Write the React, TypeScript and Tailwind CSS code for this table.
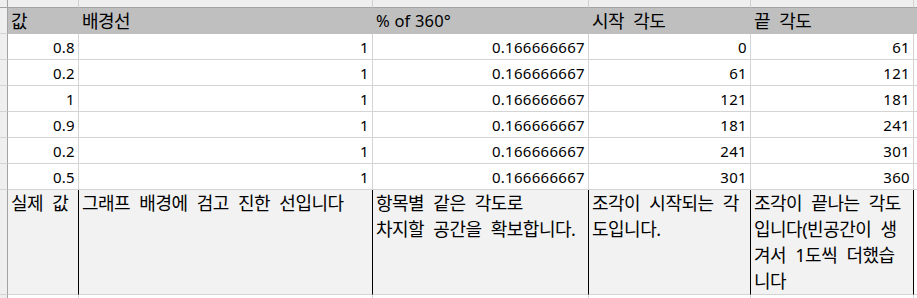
import React from "react";

const rows: [string, string, string, string, string][] = [
  ["0.8", "1", "0.166666667", "0", "61"],
  ["0.2", "1", "0.166666667", "61", "121"],
  ["1", "1", "0.166666667", "121", "181"],
  ["0.9", "1", "0.166666667", "181", "241"],
  ["0.2", "1", "0.166666667", "241", "301"],
  ["0.5", "1", "0.166666667", "301", "360"],
];

const headers = ["값", "배경선", "% of 360°", "시작 각도", "끝 각도"];

const descs: string[][] = [
  ["실제 값"],
  ["그래프 배경에 검고 진한 선입니다"],
  ["항목별 같은 각도로", "차지할 공간을 확보합니다."],
  ["조각이 시작되는 각", "도입니다."],
  ["조각이 끝나는 각도", "입니다(빈공간이 생", "겨서 1도씩 더했습", "니다"],
];

const kr =
  "text-[18px] tracking-[-0.5px] [word-spacing:5px] whitespace-nowrap text-black";
const num = "text-[15px] tracking-[0.3px] whitespace-nowrap text-black";

export default function App() {
  return (
    <div className="w-[917px] h-[298px] overflow-hidden bg-white font-['Noto_Sans','Noto_Sans_CJK_KR',sans-serif]">
      <div className="grid grid-cols-[8px_71px_294px_216px_162px_163px_1fr]">
        {/* top column-header strip */}
        <div className="h-[8px] bg-[#efefef] border-r border-b border-[#a3a3a3]" />
        {[0, 1, 2, 3, 4].map((i) => (
          <div
            key={"t" + i}
            className="h-[8px] bg-[#efefef] border-r border-r-[#d0d0d0] border-b border-b-[#a3a3a3]"
          />
        ))}
        <div className="h-[8px] bg-[#efefef] border-b border-b-[#a3a3a3]" />

        {/* header row */}
        <div className="h-[26px] bg-[#efefef] border-r border-r-[#a3a3a3] border-b border-b-[#d4d4d4]" />
        {headers.map((h, i) => (
          <div
            key={"h" + i}
            className={`h-[26px] bg-[#bfbfbf] pl-[3px] leading-[26px] ${
              i === 2 ? "text-[16.5px] tracking-[0.2px] whitespace-nowrap text-black" : kr
            }`}
          >
            {h}
          </div>
        ))}
        <div className="h-[26px] bg-[#bfbfbf]" />

        {/* data rows */}
        {rows.map((r, ri) => (
          <React.Fragment key={"r" + ri}>
            <div className="h-[26px] bg-[#efefef] border-r border-r-[#a3a3a3] border-b border-b-[#d4d4d4]" />
            {r.map((v, ci) => (
              <div
                key={ci}
                className={`h-[26px] bg-white border-r border-b border-[#d4d4d4] pr-[3px] pt-[2px] leading-[23px] text-right ${num}`}
              >
                {v}
              </div>
            ))}
            <div className="h-[26px] bg-white border-b border-[#d4d4d4]" />
          </React.Fragment>
        ))}

        {/* description row */}
        <div className="h-[105px] bg-[#efefef] border-r border-r-[#a3a3a3] border-b border-b-[#d4d4d4]" />
        {descs.map((lines, i) => (
          <div
            key={"d" + i}
            className={`h-[105px] bg-[#f2f2f2] border-r border-r-black border-b border-b-[#d4d4d4] pl-[3px] leading-[26px] ${kr}`}
          >
            {lines.map((l, li) => (
              <div key={li}>{l}</div>
            ))}
          </div>
        ))}
        <div className="h-[105px] bg-white border-b border-[#d4d4d4]" />

        {/* next row (partially visible) */}
        <div className="h-[26px] bg-[#efefef] border-r border-r-[#a3a3a3]" />
        {[0, 1, 2, 3, 4].map((i) => (
          <div key={"n" + i} className="h-[26px] bg-white border-r border-[#d4d4d4]" />
        ))}
        <div className="h-[26px] bg-white" />
      </div>
    </div>
  );
}
